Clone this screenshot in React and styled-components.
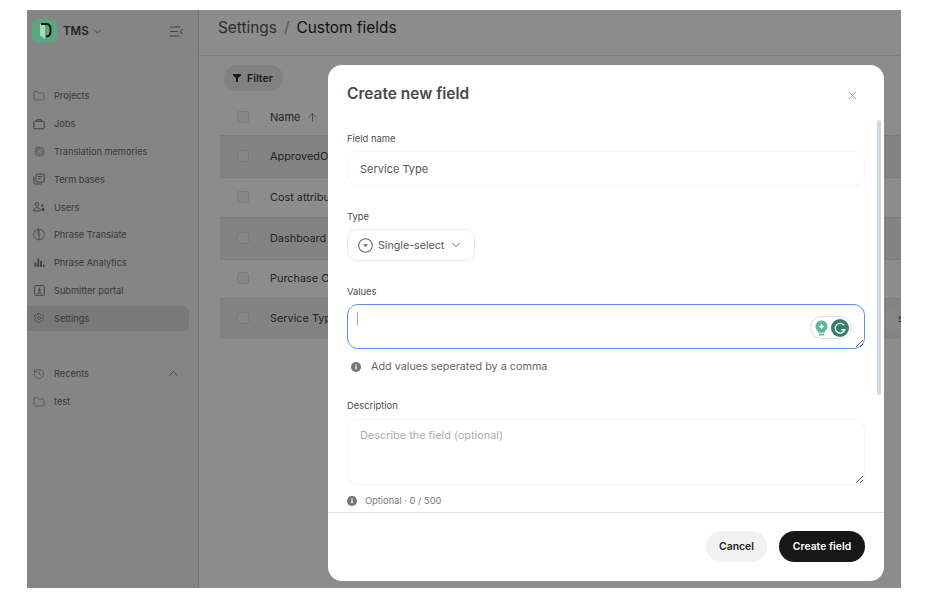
import React from 'react';
import styled, { createGlobalStyle } from 'styled-components';
import { ArrowUp, ChevronDown, ChevronUp, Folder, Cpu, Settings, History, X } from 'lucide-react';

const GlobalStyle = createGlobalStyle`
  html, body { margin: 0; background: #fff; }
  body { font-family: Inter, "Liberation Sans", sans-serif; }
`;

const Page = styled.div`
  width: 933px;
  height: 612px;
  padding: 10px 32px 24px 27px;
  box-sizing: border-box;
  overflow: hidden;
`;

const Frame = styled.div`
  position: relative;
  display: flex;
  height: 100%;
  overflow: hidden;
  background: #fff;
`;

const Overlay = styled.div`
  position: absolute;
  inset: 0;
  background: rgba(0, 0, 0, 0.45);
`;

const Sidebar = styled.aside`
  width: 171px;
  flex: none;
  background: #f2f2f2;
  border-right: 1px solid #d6d6d6;
  display: flex;
  flex-direction: column;
`;

const Brand = styled.div`
  display: flex;
  align-items: center;
  height: 42px;
  padding: 0 14px 0 5px;
  margin-bottom: 30px;
`;

const LogoMark = styled.svg`
  position: relative;
  z-index: 1;
  flex: none;
`;

const BrandName = styled.span`
  margin: 0 2px 0 6px;
  font-size: 11.5px;
  font-weight: 600;
  color: #444;
`;

const Collapse = styled.svg`
  margin-left: auto;
  color: #777;
`;

const Nav = styled.nav`
  display: flex;
  flex-direction: column;
`;

const NavItem = styled.div`
  display: flex;
  align-items: center;
  gap: 9px;
  height: 25px;
  margin: 1.4px 9px 1.4px 0;
  padding-left: 6px;
  font-size: 9.2px;
  color: #6a6a6a;
  border-radius: 0 6px 6px 0;
  background: ${(p) => (p.$active ? '#dcdcdc' : 'transparent')};
`;

const IconSlot = styled.span`
  display: flex;
  align-items: center;
  justify-content: center;
  width: 12px;
  height: 13px;
  flex: none;
  color: #777;
`;

const RecentsHead = styled(NavItem)`
  margin-top: 29.4px;
  span:nth-child(2) { flex: 1; }
`;

const RecentsToggle = styled(ChevronUp)`
  margin-right: 8px;
  color: #777;
`;

const Main = styled.main`
  flex: 1;
  min-width: 0;
`;

const Header = styled.header`
  height: 37px;
  border-bottom: 1px solid #e6e6e6;
  padding: 8px 0 0 19px;
  font-size: 15.4px;
  line-height: 20px;
  display: flex;
  gap: 7px;
`;

const Crumb = styled.span`
  color: ${(p) => (p.$faint ? '#999' : p.$muted ? '#555' : '#1f1f1f')};
`;

const Content = styled.div`
  padding: 9px 0 0 21px;
`;

const FilterButton = styled.button`
  display: flex;
  align-items: center;
  gap: 6px;
  height: 26px;
  width: 59px;
  margin-left: 4px;
  padding: 0 0 0 9px;
  border: 0;
  border-radius: 13px;
  background: #ececec;
  font: 600 10.5px Inter, sans-serif;
  color: #333;
`;

const HeadRow = styled.div`
  display: flex;
  align-items: center;
  height: 44px;
  box-sizing: border-box;
  padding: 8px 0 0 17px;
  font-size: 11px;
  color: #444;
  svg { margin-left: 5px; color: #555; }
`;

const Row = styled.div`
  position: relative;
  display: flex;
  align-items: center;
  height: ${(p) => p.$h}px;
  padding: 0 0 2px 17px;
  font-size: 10.9px;
  color: #444;
  white-space: nowrap;
  background: ${(p) => (p.$shade ? '#eeeeee' : 'transparent')};
  border-top: 1px solid #e2e2e2;
  box-sizing: border-box;
`;

const Check = styled.span`
  width: 10px;
  height: 10px;
  margin-right: 21px;
  border: 1px solid #dcdcdc;
  border-radius: 3px;
  background: #f6f6f6;
  flex: none;
`;

const Chip = styled.span`
  position: absolute;
  left: 666px;
  top: 7px;
  width: 40px;
  height: 25px;
  padding-left: 12px;
  line-height: 25px;
  border-radius: 6px;
  background: #f4f4f4;
  box-sizing: border-box;
`;

const Modal = styled.div`
  position: absolute;
  left: 301px;
  top: 55px;
  width: 556px;
  height: 516px;
  background: #fff;
  border-radius: 14px;
  display: flex;
  flex-direction: column;
  overflow: hidden;
`;

const ModalHead = styled.div`
  display: flex;
  justify-content: space-between;
  padding: 20px 25px 0 19px;
  height: 65px;
  box-sizing: border-box;
  flex: none;
`;

const Title = styled.h2`
  margin: 0;
  font-size: 15.5px;
  line-height: 18px;
  font-weight: 600;
  color: #4a4a4a;
`;

const CloseIcon = styled(X)`
  margin-top: 4px;
  color: #8a8a8a;
`;

const ModalBody = styled.div`
  position: relative;
  flex: 1;
  padding: 3px 19px 0;
  min-height: 0;
`;

const Thumb = styled.div`
  position: absolute;
  right: 3px;
  top: -10px;
  height: 275px;
  width: 4px;
  border-radius: 2px;
  background: #d2d9e6;
`;

const Label = styled.label`
  display: block;
  font-size: 9.4px;
  line-height: 12px;
  color: #4c4c4c;
  margin-bottom: ${(p) => p.$gap || 6}px;
  margin-top: ${(p) => p.$top || 0}px;
`;

const TextInput = styled.input`
  display: block;
  width: 518px;
  height: 35px;
  box-sizing: border-box;
  padding: 0 12px;
  border: 1px solid #f4f4f4;
  border-radius: 10px;
  outline: none;
  font: 400 11px Inter, sans-serif;
  color: #555;
`;

const Select = styled.div`
  display: flex;
  align-items: center;
  width: 128px;
  height: 32px;
  padding-left: 10px;
  gap: 5px;
  box-sizing: border-box;
  border: 1px solid #e9e9e9;
  border-radius: 10px;
  font-size: 10.7px;
  color: #555;
`;

const AreaWrap = styled.div`
  position: relative;
  width: 518px;
`;

const Area = styled.textarea`
  display: block;
  width: 518px;
  height: ${(p) => p.$h}px;
  box-sizing: border-box;
  padding: 8px 12px;
  border: ${(p) => (p.$focus ? '1px solid #5b8def' : '1px solid #f4f4f4')};
  border-radius: 11px;
  outline: none;
  font: 400 10.9px Inter, sans-serif;
  color: #555;
  &::placeholder { color: #a9adb6; }
`;

const Caret = styled.span`
  position: absolute;
  left: 10px;
  top: 8px;
  width: 1px;
  height: 13px;
  background: #8fa6d8;
`;

const Pill = styled.div`
  position: absolute;
  right: 13px;
  top: 12px;
  display: flex;
  align-items: center;
  gap: 3px;
  width: 42px;
  height: 23px;
  padding: 0 2px 0 4px;
  box-sizing: border-box;
  border: 1px solid #dcdce4;
  border-radius: 12px;
  background: #fff;
`;

const Hint = styled.div`
  display: flex;
  align-items: center;
  gap: ${(p) => (p.$small ? 8 : 10)}px;
  padding-left: ${(p) => (p.$small ? 0 : 4)}px;
  margin-top: ${(p) => (p.$small ? 9 : 11)}px;
  font-size: ${(p) => (p.$small ? 9.3 : 10.8)}px;
  line-height: 13px;
  color: ${(p) => (p.$small ? '#777' : '#666')};
`;

const Footer = styled.div`
  flex: none;
  display: flex;
  justify-content: flex-end;
  gap: 12px;
  height: 69px;
  padding: 18px 19px 0 0;
  box-sizing: border-box;
  border-top: 1px solid #e4e4e4;
`;

const Button = styled.button`
  height: 31px;
  border: 0;
  border-radius: 16px;
  font: 600 10.4px Inter, sans-serif;
  width: ${(p) => (p.$primary ? 86 : 61)}px;
  background: ${(p) => (p.$primary ? '#171717' : '#f2f2f2')};
  color: ${(p) => (p.$primary ? '#fff' : '#222')};
`;

const Logo = () => (
  <LogoMark width="25" height="24" viewBox="0 0 25 24">
    <rect width="25" height="24" rx="6" fill="#5ba67e" />
    <path d="M8 5h5v15l-5-3.5z" fill="#a9d6be" />
    <path d="M9 5h5c3 0 4.5 1.8 4.5 4.6v3.2c0 2.8-1.5 4.6-4.5 4.6" fill="none" stroke="#141a17" strokeWidth="2" />
  </LogoMark>
);

const InfoDot = ({ size }) => (
  <svg width={size} height={size} viewBox="0 0 12 12">
    <circle cx="6" cy="6" r="6" fill="#777" />
    <rect x="5.2" y="5.2" width="1.6" height="3.6" fill="#fff" />
    <rect x="5.2" y="3" width="1.6" height="1.5" fill="#fff" />
  </svg>
);

const JobsIcon = () => (
  <svg width="12" height="12" viewBox="0 0 12 12" fill="none" stroke="currentColor" strokeWidth="1">
    <rect x="0.8" y="3.2" width="10.4" height="7.6" rx="1" />
    <path d="M4 3.2V1.4h4v1.8" />
  </svg>
);

const TermIcon = () => (
  <svg width="12" height="12" viewBox="0 0 12 12" fill="none" stroke="currentColor" strokeWidth="1">
    <rect x="3" y="1" width="8.2" height="8" rx="1" />
    <path d="M5 3.6h4M5 5.8h2.6M0.9 3.4v6.4c0 .7.5 1.2 1.2 1.2h6.4" />
  </svg>
);

const UsersIcon = () => (
  <svg width="12" height="12" viewBox="0 0 12 12" fill="none" stroke="currentColor">
    <circle cx="4" cy="3.4" r="1.8" strokeWidth="1" />
    <path d="M0.8 10v-1c0-1.4 1.3-2.2 3.2-2.2s3.2.8 3.2 2.2v1z" strokeWidth="1" />
    <circle cx="9.2" cy="4.6" r="1.2" fill="currentColor" stroke="none" />
    <path d="M8.6 7h1c1.2 0 1.9.7 1.9 1.6V10H8.8z" fill="currentColor" stroke="none" />
  </svg>
);

const TranslateIcon = () => (
  <svg width="13" height="13" viewBox="0 0 13 13" fill="none" stroke="currentColor" strokeWidth="0.9">
    <circle cx="6.5" cy="6.5" r="5.8" />
    <path d="M6.5 0.7C4.8 3 4.8 6 6.5 7.2M6.5 0.7V12.3" />
  </svg>
);

const AnalyticsIcon = () => (
  <svg width="11" height="11" viewBox="0 0 11 11" fill="currentColor">
    <rect x="0.6" y="5.5" width="1.8" height="4.5" />
    <rect x="3.4" y="1.5" width="1.8" height="8.5" />
    <rect x="6.2" y="4" width="1.8" height="6" />
    <rect x="9" y="7.5" width="1.6" height="2.5" />
  </svg>
);

const PortalIcon = () => (
  <svg width="11" height="11" viewBox="0 0 11 11" fill="none" stroke="currentColor" strokeWidth="1">
    <rect x="0.7" y="0.7" width="9.6" height="9.6" rx="0.8" />
    <path d="M5.5 2.6v3.4M4 4.7l1.5 1.4L7 4.7M3.2 8h4.6" />
  </svg>
);

const SelectGlyph = () => (
  <svg width="15" height="15" viewBox="0 0 15 15" fill="none">
    <circle cx="7.5" cy="7.5" r="6.8" stroke="#666" strokeWidth="1.1" />
    <path d="M5 6.3h5L7.5 9z" fill="#666" />
  </svg>
);

const Bulb = () => (
  <svg width="13" height="16" viewBox="0 0 12 15">
    <path d="M6 .5a5.5 5.5 0 0 1 3.2 10L8.8 12H3.2l-.4-1.5A5.5 5.5 0 0 1 6 .5z" fill="#5fb597" />
    <rect x="3.4" y="13" width="5.2" height="1.5" rx=".7" fill="#5fb597" />
    <path d="M6 3.2l.9 2 2 .9-2 .9-.9 2-.9-2-2-.9 2-.9z" fill="#fff" />
  </svg>
);

const GrammarlyMark = () => (
  <svg width="18" height="18" viewBox="0 0 17 17" fill="none">
    <circle cx="8.5" cy="8.5" r="8.5" fill="#3b7d6b" />
    <path d="M12.4 6A4.6 4.6 0 1 0 13 10.2H9.6" stroke="#fff" strokeWidth="1.3" />
  </svg>
);

const CollapseIcon = () => (
  <Collapse width="15" height="11" viewBox="0 0 15 11" fill="none" stroke="currentColor" strokeWidth="1">
    <path d="M1 1h10M1 5.5h8M1 10h10M14 3l-3 2.5 3 2.5" />
  </Collapse>
);

const navItems = [
  { label: 'Projects', icon: <Folder size={12} strokeWidth={1.2} /> },
  { label: 'Jobs', icon: <JobsIcon /> },
  { label: 'Translation memories', icon: <Cpu size={11} strokeWidth={1.2} /> },
  { label: 'Term bases', icon: <TermIcon /> },
  { label: 'Users', icon: <UsersIcon /> },
  { label: 'Phrase Translate', icon: <TranslateIcon /> },
  { label: 'Phrase Analytics', icon: <AnalyticsIcon /> },
  { label: 'Submitter portal', icon: <PortalIcon /> },
  { label: 'Settings', icon: <Settings size={12} strokeWidth={1.2} />, active: true },
];

const rows = [
  { name: 'ApprovedO', h: 42, shade: true },
  { name: 'Cost attribu', h: 40 },
  { name: 'Dashboard', h: 42, shade: true },
  { name: 'Purchase O', h: 39 },
  { name: 'Service Typ', h: 41, shade: true, chip: true },
];

export default function App() {
  return (
    <>
      <GlobalStyle />
      <Page>
        <Frame>
          <Sidebar>
            <Brand>
              <Logo />
              <BrandName>TMS</BrandName>
              <ChevronDown size={13} color="#555" strokeWidth={1.4} />
              <CollapseIcon />
            </Brand>
            <Nav>
              {navItems.map((item) => (
                <NavItem key={item.label} $active={item.active}>
                  <IconSlot>{item.icon}</IconSlot>
                  {item.label}
                </NavItem>
              ))}
              <RecentsHead>
                <IconSlot><History size={12} strokeWidth={1.2} /></IconSlot>
                <span>Recents</span>
                <RecentsToggle size={15} strokeWidth={1.4} />
              </RecentsHead>
              <NavItem>
                <IconSlot><Folder size={12} strokeWidth={1.2} /></IconSlot>
                test
              </NavItem>
            </Nav>
          </Sidebar>
          <Main>
            <Header>
              <Crumb $muted>Settings</Crumb>
              <Crumb $faint>/</Crumb>
              <Crumb>Custom fields</Crumb>
            </Header>
            <Content>
              <FilterButton>
                <svg width="8" height="8" viewBox="0 0 8 8" fill="#333"><path d="M0 0h8v1.6L5 4v4H3V4L0 1.6z" /></svg>
                Filter
              </FilterButton>
              <div>
                <HeadRow>
                  <Check />
                  Name
                  <ArrowUp size={13} strokeWidth={1.2} />
                </HeadRow>
                {rows.map((row) => (
                  <Row key={row.name} $h={row.h} $shade={row.shade}>
                    <Check />
                    {row.name}
                    {row.chip && <Chip>s</Chip>}
                  </Row>
                ))}
              </div>
            </Content>
          </Main>
          <Overlay />
          <Modal>
            <ModalHead>
              <Title>Create new field</Title>
              <CloseIcon size={13} strokeWidth={1.4} />
            </ModalHead>
            <ModalBody>
              <Thumb />
              <Label>Field name</Label>
              <TextInput defaultValue="Service Type" readOnly />
              <Label $top={25}>Type</Label>
              <Select>
                <SelectGlyph />
                Single-select
                <ChevronDown size={14} strokeWidth={1.4} />
              </Select>
              <Label $top={25}>Values</Label>
              <AreaWrap>
                <Area $focus $h={45} readOnly />
                <Caret />
                <Pill>
                  <Bulb />
                  <GrammarlyMark />
                </Pill>
              </AreaWrap>
              <Hint>
                <InfoDot size={10} />
                Add values seperated by a comma
              </Hint>
              <Label $top={27} $gap={7}>Description</Label>
              <Area $h={66} placeholder="Describe the field (optional)" readOnly />
              <Hint $small>
                <InfoDot size={10} />
                Optional · 0 / 500
              </Hint>
            </ModalBody>
            <Footer>
              <Button>Cancel</Button>
              <Button $primary>Create field</Button>
            </Footer>
          </Modal>
        </Frame>
      </Page>
    </>
  );
}
